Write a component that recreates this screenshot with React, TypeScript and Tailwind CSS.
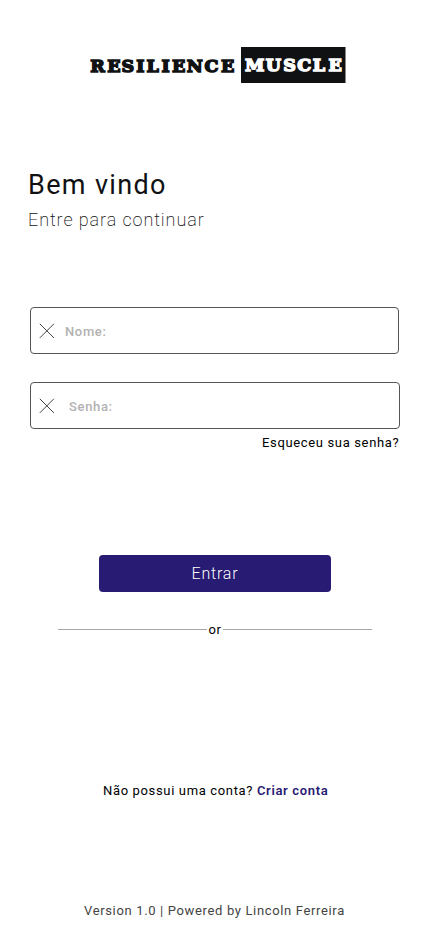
import React from "react";

function CrossIcon() {
  return (
    <svg width="16" height="16" viewBox="0 0 16 16" className="shrink-0" fill="none" stroke="#444" strokeWidth="1">
      <path d="M0.8 0.8L14.9 14.9M14.9 0.8L0.8 14.9" />
    </svg>
  );
}

function Logo() {
  return (
    <svg width="256" height="36" viewBox="0 0 256 36" className="ml-[90px] block" fontFamily="'DejaVu Serif', serif" fontWeight="700" fontSize="17.5" strokeWidth="1.5">
      <text x="0.3 17.3 31.6 46.2 56.5 71.5 82.1 96.7 114.6 131" y="25.3" fill="#101112" stroke="#101112">RESILIENCE</text>
      <rect x="151" width="104.5" height="36" fill="#101112" />
      <text x="155 175.8 193.2 207.3 222.8 238.6" y="24.3" fill="#fff" stroke="#fff">MUSCLE</text>
    </svg>
  );
}

export default function App() {
  return (
    <main className="flex h-[932px] w-[430px] flex-col overflow-hidden bg-white pt-[47px] font-['Roboto',sans-serif] text-[13px] leading-4 whitespace-nowrap text-[#101112]">
      <Logo />
      <header className="mt-[86px] ml-7">
        <h1 className="text-[27px] leading-8 tracking-[1.35px]">Bem vindo</h1>
        <p className="mt-[7px] text-[18px] leading-6 font-extralight tracking-[0.92px] text-[#101112]">Entre para continuar</p>
      </header>
      <form className="mt-[75px] flex flex-col">
        <label className="ml-[30px] flex h-[47px] w-[369px] items-center gap-[10px] rounded-[4px] border border-[#555] pl-2 font-medium tracking-[0.65px] text-[#b2b2b2]">
          <CrossIcon />
          <span className="pt-[2px]">Nome:</span>
        </label>
        <label className="mt-7 ml-[30px] flex h-[47px] w-[370px] items-center gap-[14px] rounded-[4px] border border-[#555] pl-2 font-medium tracking-[0.65px] text-[#b2b2b2]">
          <CrossIcon />
          <span className="pt-[2px]">Senha:</span>
        </label>
        <a className="mt-[6px] ml-[262px] tracking-[0.65px] text-black">Esqueceu sua senha?</a>
        <button type="button" className="mt-[104px] ml-[99px] h-[37px] w-[232px] rounded-[4px] bg-[#281b74] pt-px text-[16px] leading-5 font-light tracking-[0.8px] text-white">Entrar</button>
      </form>
      <div className="mt-[30px] ml-[58px] flex w-[314px] items-center">
        <span className="mb-px h-px flex-1 bg-[#aaa5a7]" />
        <span className="px-[1px] tracking-[0.6px] text-black">or</span>
        <span className="mb-px h-px flex-1 bg-[#aaa5a7]" />
      </div>
      <p className="mt-[145px] ml-[103px] tracking-[0.65px] text-black">
        Não possui uma conta? <a className="font-semibold text-[#281b74]">Criar conta</a>
      </p>
      <footer className="mt-[104px] ml-[84px] tracking-[0.65px] text-[#444]">Version 1.0 | Powered by Lincoln Ferreira</footer>
    </main>
  );
}
